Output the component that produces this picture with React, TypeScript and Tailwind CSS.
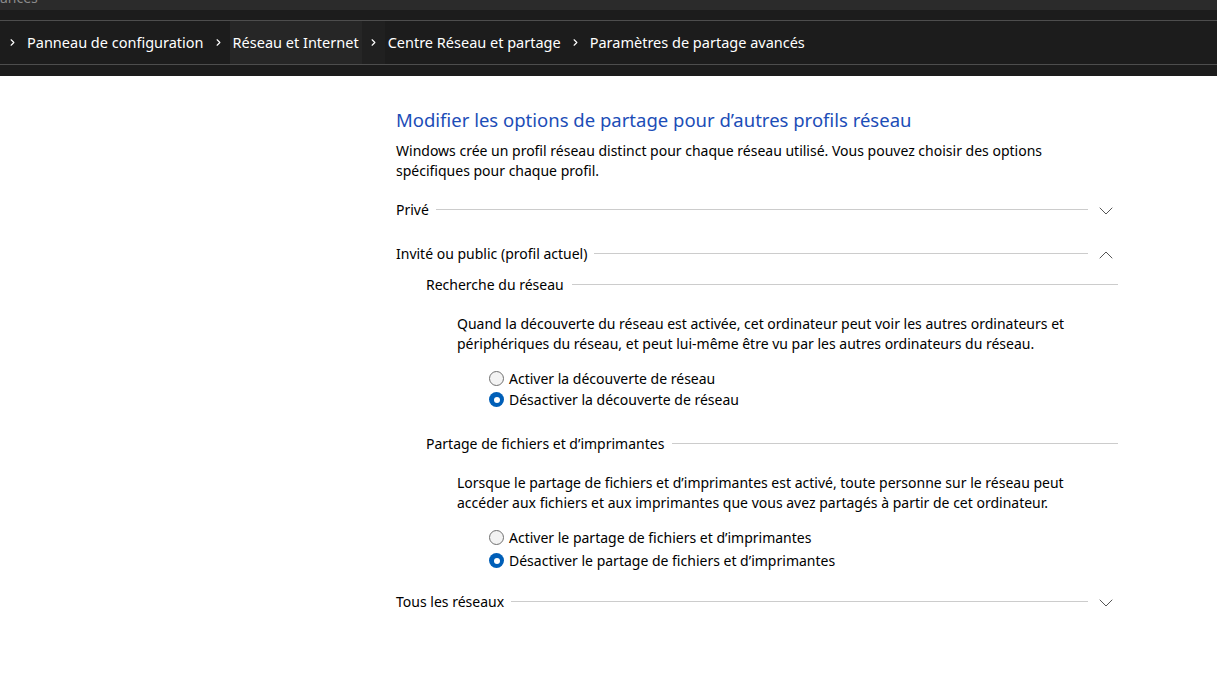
import { ChevronDown, ChevronUp, ChevronRight } from "lucide-react";

const font = { fontFamily: '"Noto Sans", "Open Sans", sans-serif' };

function Crumb({ label, active, first }: { label: string; active?: boolean; first?: boolean }) {
  return (
    <>
      {first && (
        <div className="flex h-full w-[24px] items-center justify-center">
          <ChevronRight className="h-[11px] w-[11px] text-white" strokeWidth={2.5} />
        </div>
      )}
      <div className={`flex h-full items-center px-[3px] ${active ? "bg-[#262626]" : ""}`}>
        <span className="text-[14.5px] text-white">{label}</span>
      </div>
      <div className={`flex h-full w-[23px] items-center justify-center ${active ? "bg-[#202020]" : ""}`}>
        <ChevronRight className="h-[11px] w-[11px] text-white" strokeWidth={2.5} />
      </div>
    </>
  );
}

function SectionHeader({ label, open, className = "" }: { label: string; open?: boolean; className?: string }) {
  return (
    <div className={`flex h-[20px] items-center ${className}`}>
      <span className="text-[14px] text-black">{label}</span>
      <div className="ml-[7px] h-px flex-1 bg-[#cccccc]" />
      <div className="flex w-[30px] items-center justify-center pl-[6px] pt-[4px]">
        {open ? (
          <ChevronUp className="h-[24px] w-[24px] text-[#555]" strokeWidth={1} />
        ) : (
          <ChevronDown className="h-[24px] w-[24px] text-[#555]" strokeWidth={1} />
        )}
      </div>
    </div>
  );
}

function SubHeader({ label, className = "" }: { label: string; className?: string }) {
  return (
    <div className={`flex h-[20px] items-center pl-[30px] ${className}`}>
      <span className="text-[14px] text-black">{label}</span>
      <div className="ml-[8px] h-px flex-1 bg-[#cccccc]" />
    </div>
  );
}

function Radio({ label, checked, h }: { label: string; checked?: boolean; h: string }) {
  return (
    <div className={`flex items-center pl-[93px] ${h}`}>
      {checked ? (
        <span className="flex h-[15px] w-[15px] items-center justify-center rounded-full bg-[#005fb8]">
          <span className="h-[6px] w-[6px] rounded-full bg-white" />
        </span>
      ) : (
        <span className="h-[15px] w-[15px] rounded-full border border-[#707070] bg-[#f3f3f3]" />
      )}
      <span className="ml-[5px] text-[14px] text-black">{label}</span>
    </div>
  );
}

export default function App() {
  return (
    <div className="min-h-screen bg-white" style={font}>
      {/* window title strip */}
      <div className="h-[10px] overflow-hidden bg-[#2b2b2b]">
        <div className="-ml-[15px] -mt-[12px] text-[14px] leading-[20px] text-[#8a8a8a]">avancés</div>
      </div>
      <div className="box-content h-[10px] border-b border-[#4d4d4d] bg-[#1c1c1c]" />

      {/* breadcrumb */}
      <div className="box-content flex h-[43px] items-center border-b border-[#4d4d4d] bg-[#1c1c1c]">
        <Crumb label="Panneau de configuration" first />
        <Crumb label="Réseau et Internet" active />
        <Crumb label="Centre Réseau et partage" />
        <div className="flex h-full items-center px-[3px]">
          <span className="text-[14.5px] text-white">Paramètres de partage avancés</span>
        </div>
      </div>
      <div className="h-[11px] bg-[#1c1c1c]" />

      {/* content */}
      <div className="ml-[396px] w-[722px] pt-[32px]">
        <h1 className="text-[18.5px] leading-[24px] text-[#1c4db7]">
          Modifier les options de partage pour d’autres profils réseau
        </h1>
        <p className="mt-[9px] text-[14px] leading-[20px] text-black">
          Windows crée un profil réseau distinct pour chaque réseau utilisé. Vous pouvez choisir des options
          <br />
          spécifiques pour chaque profil.
        </p>

        <SectionHeader label="Privé" className="mt-[18px]" />
        <SectionHeader label="Invité ou public (profil actuel)" open className="mt-[24px]" />

        <SubHeader label="Recherche du réseau" className="mt-[11px]" />
        <p className="ml-[61px] mt-[20px] text-[14px] leading-[20px] text-black">
          Quand la découverte du réseau est activée, cet ordinateur peut voir les autres ordinateurs et
          <br />
          périphériques du réseau, et peut lui-même être vu par les autres ordinateurs du réseau.
        </p>
        <div className="mt-[14px]">
          <Radio label="Activer la découverte de réseau" h="h-[21px]" />
          <Radio label="Désactiver la découverte de réseau" checked h="h-[21px]" />
        </div>

        <SubHeader label="Partage de fichiers et d’imprimantes" className="mt-[23px]" />
        <p className="ml-[61px] mt-[20px] text-[14px] leading-[20px] text-black">
          Lorsque le partage de fichiers et d’imprimantes est activé, toute personne sur le réseau peut
          <br />
          accéder aux fichiers et aux imprimantes que vous avez partagés à partir de cet ordinateur.
        </p>
        <div className="mt-[13px]">
          <Radio label="Activer le partage de fichiers et d’imprimantes" h="h-[23px]" />
          <Radio label="Désactiver le partage de fichiers et d’imprimantes" checked h="h-[23px]" />
        </div>

        <SectionHeader label="Tous les réseaux" className="mt-[19px]" />
      </div>
    </div>
  );
}
